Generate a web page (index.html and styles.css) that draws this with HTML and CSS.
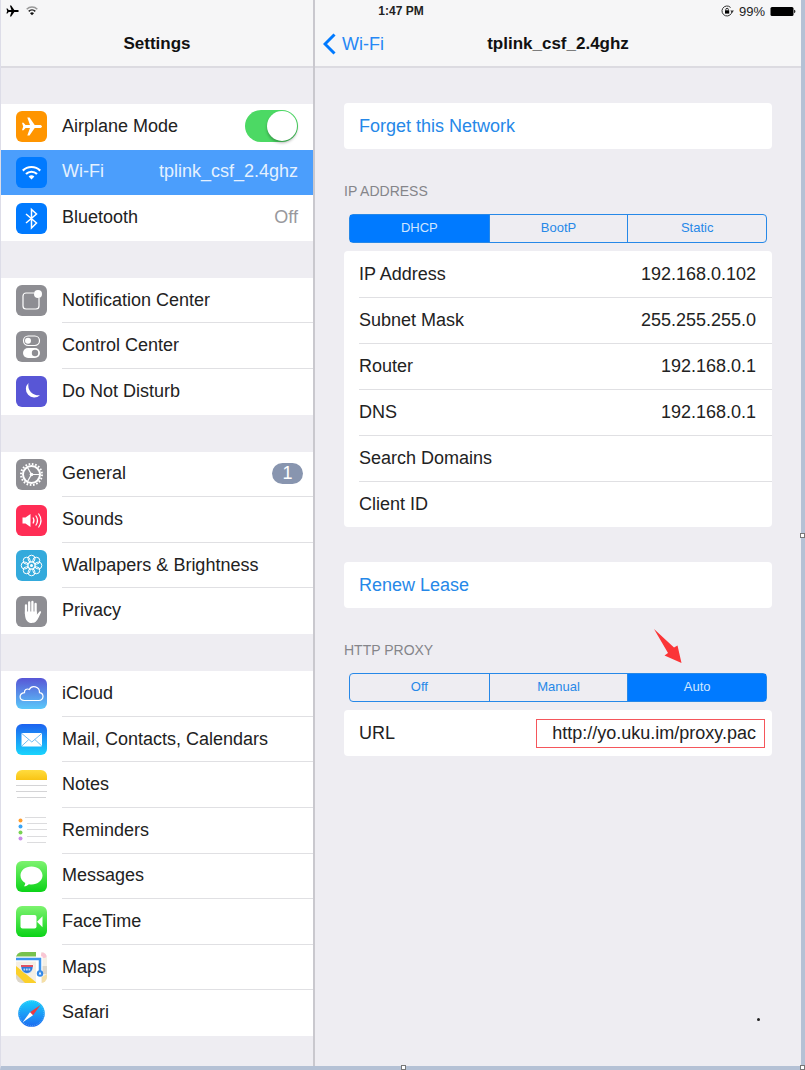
FILE: index.html
```html
<!DOCTYPE html>
<html lang="en">
<head>
  <meta charset="UTF-8">
  <meta name="viewport" content="width=device-width, initial-scale=1.0">
  <title>Settings - Wi-Fi</title>
  <link rel="stylesheet" href="styles.css">
</head>
<body>
  <div class="screen">

    <!-- Status bar -->
    <div class="status-bar">
      <div class="status-left">
        <svg width="13" height="12" viewBox="0 0 13 12"><path d="M12.8 6c0-.6-.7-1-1.500-1H8.300L5.200.5H3.900L5.400 5H2.700L1.500 3.500H.4L1.200 6 .4 8.500h1.100L2.700 7h2.700l-1.500 4.500h1.300L8.300 7h3c.8 0 1.500-.4 1.500-1z"/></svg>
        <svg width="12" height="12" viewBox="0 0 12 12" fill="none" stroke-width="1.500"><path d="M.7 4.200a7.500 7.500 0 0 1 10.600 0" stroke="#999"/><path d="M2.700 6.400a4.700 4.700 0 0 1 6.600 0" stroke="#222"/><path d="M4 8.200a2.800 2.800 0 0 1 4 0L6 10.300z" fill="#111"/></svg>
      </div>
      <span class="status-time">1:47 PM</span>
      <div class="status-right">
        <svg width="13" height="12" viewBox="0 0 13 12"><path d="M11 6.200A5 5 0 1 1 9.600 2.500" fill="none" stroke="#333"/><path d="M9.300 5.500h3.600L11.100 8z" fill="#333"/><rect x="4" y="5.300" width="4.200" height="3.300"/><path d="M4.800 5.500V4.600a1.300 1.300 0 0 1 2.600 0v.9" fill="none" stroke="#222"/></svg>
        <span>99%</span>
        <svg width="26" height="11" viewBox="0 0 26 11"><rect x=".5" y="1" width="23" height="9" rx="1.500"/><path d="M24.200 3.800c1.600.3 1.600 3.100 0 3.400z"/></svg>
      </div>
    </div>

    <!-- Sidebar -->
    <nav class="sidebar">
      <h1 class="title-bar">Settings</h1>

      <div class="group rows-3">
        <div class="row">
          <svg class="icon" viewBox="0 0 31 31"><rect width="31" height="31" rx="6" fill="#ff9500"/><path d="M26 15.500c0-.9-1-1.500-2.300-1.500h-5L13.500 6.500h-2.200L14 14H9.500l-2-2.300H6l1.200 3.800L6 19.300h1.500l2-2.300H14l-2.700 7.500h2.200l5.200-7.500h5c1.300 0 2.300-.6 2.300-1.500z" fill="#fff"/></svg>
          <div class="row-body">
            <label for="airplane">Airplane Mode</label>
            <input class="switch" type="checkbox" id="airplane" checked>
          </div>
        </div>
        <a class="row active" href="#wifi">
          <svg class="icon" viewBox="0 0 31 31"><rect width="31" height="31" rx="6" fill="#007aff"/><g fill="none" stroke="#fff" stroke-width="2.200"><path d="M6.800 13.600a12.300 12.300 0 0 1 17.400 0"/><path d="M10 17a7.800 7.800 0 0 1 11 0"/></g><path d="M12.600 19.600a4.200 4.200 0 0 1 5.800 0l-2.900 3z" fill="#fff"/></svg>
          <div class="row-body"><span>Wi-Fi</span><span>tplink_csf_2.4ghz</span></div>
        </a>
        <a class="row" href="#bluetooth">
          <svg class="icon" viewBox="0 0 31 31"><rect width="31" height="31" rx="6" fill="#007aff"/><path d="M10 11l10.500 9-5 5V6.500l5 4.500L10 20" fill="none" stroke="#fff" stroke-width="1.500"/></svg>
          <div class="row-body"><span>Bluetooth</span><span class="muted">Off</span></div>
        </a>
      </div>

      <div class="group rows-3">
        <a class="row" href="#notifications">
          <svg class="icon" viewBox="0 0 31 31"><rect width="31" height="31" rx="6" fill="#8e8e93"/><path d="M18 8H10a3 3 0 0 0-3 3v10a3 3 0 0 0 3 3h10a3 3 0 0 0 3-3v-8" fill="none" stroke="#fff" stroke-width="1.200"/><circle cx="22" cy="9" r="4" fill="#fff"/></svg>
          <div class="row-body"><span>Notification Center</span></div>
        </a>
        <a class="row" href="#control-center">
          <svg class="icon" viewBox="0 0 31 31"><rect width="31" height="31" rx="6" fill="#8e8e93"/><rect x="7.500" y="5" width="16" height="9.500" rx="4.700" fill="none" stroke="#fff" stroke-width="1.200"/><circle cx="12" cy="9.700" r="3" fill="#fff"/><rect x="7" y="17" width="17" height="10" rx="5" fill="#fff"/><circle cx="19" cy="22" r="3.200" fill="#8e8e93"/></svg>
          <div class="row-body"><span>Control Center</span></div>
        </a>
        <a class="row" href="#dnd">
          <svg class="icon" viewBox="0 0 31 31"><rect width="31" height="31" rx="6" fill="#5856d6"/><path d="M12.500 7a8.300 8.300 0 1 0 11.500 12.200A10 10 0 0 1 12.500 7z" fill="#fff"/></svg>
          <div class="row-body"><span>Do Not Disturb</span></div>
        </a>
      </div>

      <div class="group rows-4">
        <a class="row" href="#general">
          <svg class="icon" viewBox="0 0 31 31"><rect width="31" height="31" rx="6" fill="#8e8e93"/><g fill="none" stroke="#fff"><circle cx="15.500" cy="15.500" r="10.500" stroke-width="2" stroke-dasharray="1.650 1.650"/><circle cx="15.500" cy="15.500" r="8.500" stroke-width="2"/><path d="M15.500 15.500h8M15.500 15.500l-4-7M15.500 15.500l-4 7" stroke-width="1.200"/></g><circle cx="15.500" cy="15.500" r="1.800" fill="#fff"/></svg>
          <div class="row-body"><span>General</span><span class="badge">1</span></div>
        </a>
        <a class="row" href="#sounds">
          <svg class="icon" viewBox="0 0 31 31"><rect width="31" height="31" rx="6" fill="#ff2d55"/><path d="M6.500 12.500h3l5-3.500v13l-5-3.500h-3z" fill="#fff"/><g fill="none" stroke="#fff" stroke-width="1.200"><path d="M17 12.500q2 3 0 6"/><path d="M19.700 10.500q3.600 5 0 10"/><path d="M22.500 8.500q5 7 0 14"/></g></svg>
          <div class="row-body"><span>Sounds</span></div>
        </a>
        <a class="row" href="#wallpapers">
          <svg class="icon" viewBox="0 0 31 31"><rect width="31" height="31" rx="6" fill="#34aadc"/><g fill="none" stroke="#fff"><circle cx="15.500" cy="8.700" r="3.500"/><circle cx="20.300" cy="10.700" r="3.500"/><circle cx="22.300" cy="15.500" r="3.500"/><circle cx="20.300" cy="20.300" r="3.500"/><circle cx="15.500" cy="22.300" r="3.500"/><circle cx="10.700" cy="20.300" r="3.500"/><circle cx="8.700" cy="15.500" r="3.500"/><circle cx="10.700" cy="10.700" r="3.500"/><circle cx="15.500" cy="15.500" r="3.800"/></g><circle cx="15.500" cy="15.500" r="1.500" fill="#fff"/></svg>
          <div class="row-body"><span>Wallpapers &amp; Brightness</span></div>
        </a>
        <a class="row" href="#privacy">
          <svg class="icon" viewBox="0 0 31 31"><rect width="31" height="31" rx="6" fill="#8e8e93"/><g stroke="#fff" stroke-width="2.300" stroke-linecap="round"><path d="M10 9.500V18M13.200 6.500V18M16.400 6V18M19.600 8V18"/></g><path d="M8.900 15.500h11.900v3.300l2.700-3.200c.9-.9 2-.1 1.500.9-1.500 2.800-2.700 6.800-5.300 9.200-1.600 1.500-6 1.700-7.900 0-2.300-2.100-2.900-5-2.900-10.200z" fill="#fff"/></svg>
          <div class="row-body"><span>Privacy</span></div>
        </a>
      </div>

      <div class="group rows-8">
        <a class="row" href="#icloud">
          <svg class="icon" viewBox="0 0 31 31">
            <defs><linearGradient id="cloud" x2="0" y2="1"><stop stop-color="#5856d6"/><stop offset="1" stop-color="#5ac8fa"/></linearGradient></defs>
            <rect width="31" height="31" rx="6" fill="url(#cloud)"/><path d="M8.200 22.500h14.500c5.500-.3 5.700-7 .8-7.800.3-6.200-7.700-8.300-10.200-3.200-2.500-1.400-5.200.5-4.800 3.200-6 .8-5.700 7.600-.3 7.800z" fill="none" stroke="#fff" stroke-width="1.200"/></svg>
          <div class="row-body"><span>iCloud</span></div>
        </a>
        <a class="row" href="#mail">
          <svg class="icon" viewBox="0 0 31 31">
            <defs><linearGradient id="mail" x2="0" y2="1"><stop stop-color="#1d62f0"/><stop offset="1" stop-color="#19d5fd"/></linearGradient></defs>
            <rect width="31" height="31" rx="6" fill="url(#mail)"/><rect x="5.500" y="9" width="20.500" height="13.500" rx="1" fill="#fff"/><path d="M5.800 9.500l10 8.500 10-8.500M5.800 22l7-6.500M25.800 22l-7-6.500" fill="none" stroke="#64b5ee" stroke-width=".9"/></svg>
          <div class="row-body"><span>Mail, Contacts, Calendars</span></div>
        </a>
        <a class="row" href="#notes">
          <svg class="icon" viewBox="0 0 31 31">
            <defs><linearGradient id="notes" x2="0" y2="1"><stop stop-color="#ffdc3e"/><stop offset="1" stop-color="#f9c414"/></linearGradient></defs>
            <path d="M0 10V6a6 6 0 0 1 6-6h19a6 6 0 0 1 6 6v4z" fill="url(#notes)"/><path d="M0 15.500h31M0 21.500h31M1 27.500h29" stroke="#d4d4d6"/></svg>
          <div class="row-body"><span>Notes</span></div>
        </a>
        <a class="row" href="#reminders">
          <svg class="icon" viewBox="0 0 31 31"><path d="M9 2.500h21M11 8.500h20M11 14.500h20M11 21.500h20M11 27.500h19" stroke="#dcdcde"/><circle cx="4.500" cy="5.500" r="2" fill="#ff9d2f"/><circle cx="4.500" cy="11.500" r="2" fill="#3aa5f5"/><circle cx="4.500" cy="17.500" r="2" fill="#79d353"/><circle cx="4.500" cy="23.500" r="2" fill="#c98be8"/></svg>
          <div class="row-body"><span>Reminders</span></div>
        </a>
        <a class="row" href="#messages">
          <svg class="icon" viewBox="0 0 31 31">
            <defs><linearGradient id="green" x2="0" y2="1"><stop stop-color="#7df36f"/><stop offset="1" stop-color="#0bd318"/></linearGradient></defs>
            <rect width="31" height="31" rx="6" fill="url(#green)"/><path d="M15.500 5.500c-6.300 0-11 3.900-11 9 0 3.200 1.700 5.900 4.700 7.500 0 1.400-.5 2.300-1.200 3.300 2 0 3.600-.9 4.900-2.100 7.400 1.300 13.600-2.900 13.600-8.700 0-5.100-4.700-9-11-9z" fill="#fff"/></svg>
          <div class="row-body"><span>Messages</span></div>
        </a>
        <a class="row" href="#facetime">
          <svg class="icon" viewBox="0 0 31 31"><rect width="31" height="31" rx="6" fill="url(#green)"/><rect x="4.500" y="9" width="16" height="13.500" rx="2" fill="#fff"/><path d="M21 15.700l5.500-5.400v10.900z" fill="#fff"/></svg>
          <div class="row-body"><span>FaceTime</span></div>
        </a>
        <a class="row" href="#maps">
          <svg class="icon" viewBox="0 0 31 31">
            <defs><clipPath id="tile"><rect width="31" height="31" rx="6"/></clipPath></defs>
            <g clip-path="url(#tile)"><path fill="#f4efe5" d="M0 0h31v31H0z"/><path fill="#78c24e" d="M0 0h22v5H0z"/><path fill="#dcd6ca" d="M0 15l15 16H0zM26 14h5v8h-5z"/><path fill="#fbd02b" d="M0 14l21 17H9L0 22z"/><path fill="#fff" d="M20 0h5v31h-5z"/><circle cx="28" cy="3" r="3" fill="#f9c6d4"/><path fill="#f5dfa6" d="M26 25l5-3v9h-5z"/><path d="M0 7h24v14" fill="none" stroke="#fff" stroke-width="5"/><path d="M0 7h24v14" fill="none" stroke="#3d95ee" stroke-width="2.500"/><circle cx="24" cy="21.500" r="3.200" fill="#3389e8"/><path d="M22.700 22.500l1.300-3 1.300 3z" fill="#fff"/><path d="M5 13h12c.5 5-2 8-6 8.500C7 21 4.500 18 5 13z" fill="#2d7bdc" stroke="#fff" stroke-width=".6"/><path d="M5 13h12v2H5z" fill="#df5263"/><path d="M7.500 17.500h7" stroke="#b9d8fa" stroke-width="2" stroke-dasharray="1.700 .8"/></g></svg>
          <div class="row-body"><span>Maps</span></div>
        </a>
        <a class="row" href="#safari">
          <svg class="icon" viewBox="0 0 31 31">
            <defs><linearGradient id="safari" x2="0" y2="1"><stop stop-color="#19cffc"/><stop offset="1" stop-color="#1d6bf1"/></linearGradient></defs>
            <circle cx="15.500" cy="15.500" r="13.300" fill="url(#safari)"/><circle cx="15.500" cy="15.500" r="12.200" fill="none" stroke="#8fd2fb" stroke-width=".8" stroke-dasharray=".5 1.500"/><path d="M24.500 7l-7.500 10.200-3-3z" fill="#f0383d"/><path d="M6.500 24.500L14 14.200l3 3z" fill="#fff"/></svg>
          <div class="row-body"><span>Safari</span></div>
        </a>
      </div>
    </nav>

    <!-- Network details -->
    <main class="detail">
      <header class="title-bar">
        <a class="back" href="#wifi">
          <svg width="13" height="22" viewBox="0 0 13 22"><path d="M11.500 1.500L2 11l9.500 9.500" fill="none" stroke="#007aff" stroke-width="3"/></svg>
          Wi-Fi
        </a>
        <h2>tplink_csf_2.4ghz</h2>
      </header>

      <div class="content">
        <button class="card action" type="button">Forget this Network</button>

        <section>
          <h3>IP ADDRESS</h3>
          <div class="segmented" role="group" aria-label="IP address">
            <button type="button" class="selected" aria-pressed="true">DHCP</button>
            <button type="button" aria-pressed="false">BootP</button>
            <button type="button" aria-pressed="false">Static</button>
          </div>
          <dl class="card">
            <div class="field"><dt>IP Address</dt><dd>192.168.0.102</dd></div>
            <div class="field"><dt>Subnet Mask</dt><dd>255.255.255.0</dd></div>
            <div class="field"><dt>Router</dt><dd>192.168.0.1</dd></div>
            <div class="field"><dt>DNS</dt><dd>192.168.0.1</dd></div>
            <div class="field"><dt>Search Domains</dt><dd></dd></div>
            <div class="field"><dt>Client ID</dt><dd></dd></div>
          </dl>
        </section>

        <button class="card action" type="button">Renew Lease</button>

        <section>
          <h3>HTTP PROXY</h3>
          <div class="segmented" role="group" aria-label="HTTP proxy">
            <button type="button" aria-pressed="false">Off</button>
            <button type="button" aria-pressed="false">Manual</button>
            <button type="button" class="selected" aria-pressed="true">Auto
              <svg class="arrow" width="30" height="36" viewBox="0 0 30 36"><path d="M1 1l20 18.500 3.500-2L28.500 35 11.500 27.500l3.500-2.500z" fill="#fb3537"/></svg>
            </button>
          </div>
          <dl class="card">
            <div class="field"><dt>URL</dt><dd class="marked">http://yo.uku.im/proxy.pac</dd></div>
          </dl>
        </section>
      </div>
    </main>

    <span class="dot"></span>
    <span class="handle handle-right"></span>
    <span class="handle handle-bottom"></span>
    <span class="handle handle-corner"></span>
  </div>
</body>
</html>
```

FILE: styles.css
```css
* {
  box-sizing: border-box;
}
body {
  margin: 0;
  font-family: "Liberation Sans", Arial, sans-serif;
  font-size: 18px;
  color: #222;
}
h1, h2, h3, dl, dd {
  margin: 0;
}
a {
  color: inherit;
  text-decoration: none;
}
button {
  font-family: inherit;
  cursor: pointer;
}

.screen {
  position: relative;
  display: grid;
  grid-template-columns: 314px 1fr;
  grid-template-rows: 22px 1fr;
  min-height: 100vh;
  border-left: 1px solid #dddde8;
  border-right: 4px solid #b4c1d5;
  border-bottom: 4px solid #b4c1d5;
  background: #eeedf2;
}

/* Status bar */
.status-bar {
  grid-area: 1 / 1 / 2 / 3;
  z-index: 1;
  display: grid;
  grid-template-columns: 1fr auto 1fr;
  align-items: center;
  padding: 0 5px;
  font-size: 13px;
}
.status-left,
.status-right {
  display: flex;
  align-items: center;
  gap: 7px;
}
.status-right {
  justify-content: flex-end;
  gap: 5px;
}
.status-time {
  font-weight: bold;
  font-size: 12px;
}

/* Title bars */
.title-bar {
  display: flex;
  align-items: center;
  justify-content: center;
  height: 68px;
  padding-top: 22px;
  border-bottom: 2px solid #dcdbe1;
  background: #f6f6f7;
  color: #111;
  font-size: 17px;
}
.title-bar h2 {
  font-size: 17px;
}

/* Sidebar */
.sidebar {
  grid-area: 1 / 1 / 3 / 2;
  display: flex;
  flex-direction: column;
  gap: 37px;
  padding-bottom: 30px;
  border-right: 2px solid #c9c8ce;
}
.sidebar .title-bar {
  margin-bottom: -1px;
}
.group {
  display: flex;
  flex-direction: column;
  background: #fff;
}
.rows-3 {
  flex: 3 0 auto;
}
.rows-4 {
  flex: 4 0 auto;
}
.rows-8 {
  flex: 8 0 auto;
}
.row {
  display: flex;
  flex: 1 0 45px;
  align-items: center;
  gap: 15px;
  padding-left: 15px;
}
.icon {
  flex: none;
  width: 31px;
  height: 31px;
}
.row-body {
  display: flex;
  flex: 1;
  align-items: center;
  align-self: stretch;
  justify-content: space-between;
  padding-right: 15px;
  border-bottom: 1px solid #e0e0e3;
}
.row:last-child .row-body,
.rows-3:nth-child(2) .row-body {
  border-bottom-color: transparent;
}
.row.active {
  background: #4b9efc;
  color: #e4f1ff;
}
.muted {
  color: #98989d;
}
.badge {
  width: 31px;
  margin-right: -5px;
  border-radius: 11px;
  background: #8895af;
  color: #fff;
  line-height: 21px;
  text-align: center;
}
.switch {
  appearance: none;
  width: 53px;
  height: 32px;
  margin: 0;
  padding: 1px;
  border-radius: 16px;
  background: #d5d5d9;
}
.switch::before {
  content: "";
  display: block;
  width: 30px;
  height: 30px;
  border-radius: 50%;
  background: #fff;
  box-shadow: 0 2px 3px rgba(0, 0, 0, 0.3);
}
.switch:checked {
  background: #4cd964;
}
.switch:checked::before {
  margin-left: auto;
}

/* Detail pane */
.detail {
  grid-area: 1 / 2 / 3 / 3;
}
.detail .title-bar {
  display: grid;
  grid-template-columns: 1fr auto 1fr;
  padding-left: 8px;
  padding-right: 8px;
}
.back {
  display: flex;
  align-items: center;
  gap: 6px;
  color: #2688f5;
  font-size: 18px;
}
.content {
  display: flex;
  flex-direction: column;
  gap: 35px;
  padding: 35px 29px;
}
.card {
  width: 100%;
  border: 0;
  border-radius: 4px;
  background: #fff;
}
.action {
  height: 46px;
  padding: 0 15px;
  color: #2688e8;
  font-size: 18px;
  text-align: left;
}
h3 {
  margin-bottom: 16px;
  color: #85858a;
  font-size: 14px;
  font-weight: normal;
  line-height: 14px;
}
.segmented {
  display: grid;
  grid-template-columns: repeat(3, 1fr);
  height: 29px;
  margin: 0 5px 8px;
  border: 1px solid #2688e8;
  border-radius: 4px;
}
.segmented button {
  position: relative;
  padding: 0 0 2px;
  border: 0;
  background: none;
  color: #2688e8;
  font-size: 13px;
}
.segmented button + button {
  border-left: 1px solid #2688e8;
}
.segmented .selected {
  background: #007aff;
  color: #cfe6ff;
}
.field {
  display: flex;
  align-items: center;
  justify-content: space-between;
  height: 46px;
  margin-left: 15px;
  padding-right: 16px;
}
.field + .field {
  border-top: 1px solid #e0e0e3;
}

/* Annotations */
.marked {
  margin-right: -9px;
  padding: 0 8px 0 15px;
  border: 1px solid #f5565b;
  line-height: 27px;
}
.arrow {
  position: absolute;
  left: 25px;
  bottom: 37px;
}
.dot {
  position: absolute;
  right: 41px;
  bottom: 45px;
  width: 3px;
  height: 3px;
  border-radius: 50%;
  background: #222;
}
.handle {
  position: absolute;
  width: 5px;
  height: 5px;
  border: 1px solid #777;
  background: #fff;
}
.handle-right {
  top: 50%;
  right: -4px;
}
.handle-bottom {
  bottom: -4px;
  left: 50%;
}
.handle-corner {
  right: -4px;
  bottom: -4px;
}
```
